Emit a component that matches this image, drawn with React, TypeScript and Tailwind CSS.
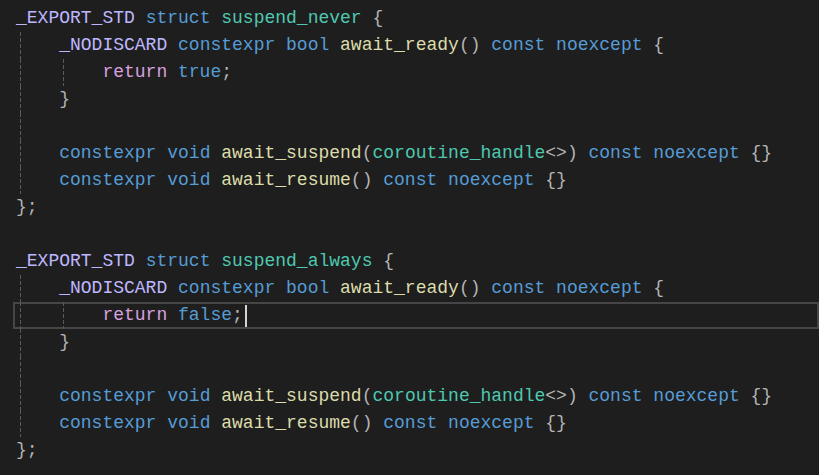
type Tok = [string, string];

const M = "text-[#beb7ff]";
const K = "text-[#569cd6]";
const T = "text-[#4ec9b0]";
const F = "text-[#dcdcaa]";
const R = "text-[#d8a0df]";
const P = "text-[#b4b4b4]";

type Line = { guides?: number; toks: Tok[]; current?: boolean };

const structLines = (name: string, value: string, current: boolean): Line[] => [
  { toks: [["_EXPORT_STD", M], [" struct ", K], [name, T], [" {", P]] },
  {
    guides: 1,
    toks: [["_NODISCARD", M], [" constexpr bool ", K], ["await_ready", F], ["()", P], [" const noexcept ", K], ["{", P]],
  },
  { guides: 2, toks: [["return", R], [" " + value, K], [";", P]], current },
  { guides: 1, toks: [["}", P]] },
  { guides: 1, toks: [] },
  {
    guides: 1,
    toks: [
      ["constexpr void ", K],
      ["await_suspend", F],
      ["(", P],
      ["coroutine_handle", T],
      ["<>)", P],
      [" const noexcept ", K],
      ["{}", P],
    ],
  },
  {
    guides: 1,
    toks: [["constexpr void ", K], ["await_resume", F], ["()", P], [" const noexcept ", K], ["{}", P]],
  },
  { toks: [["};", P]] },
];

const lines: Line[] = [
  ...structLines("suspend_never", "true", false),
  { toks: [] },
  ...structLines("suspend_always", "false", true),
];

// one indent level, 4 columns wide, with the dashed guide near its left edge
function IndentCell() {
  return (
    <span className="flex w-[4ch] shrink-0">
      <span className="ml-[4px] w-px bg-[repeating-linear-gradient(to_bottom,#5a5a5a_0_4px,transparent_4px_6px)]" />
    </span>
  );
}

function CodeLine({ line }: { line: Line }) {
  const guides = Array.from({ length: line.guides ?? 0 });
  return (
    <div
      className={
        "flex h-[27px] items-stretch pl-[3px] " +
        (line.current ? "shadow-[inset_0_0_0_2px_#464646]" : "")
      }
    >
      {guides.map((_, i) => (
        <IndentCell key={i} />
      ))}
      <span className="flex items-center whitespace-pre leading-[27px]">
        {line.toks.map(([t, c], i) => (
          <span key={i} className={c}>
            {t}
          </span>
        ))}
        {line.current && <span className="ml-[2px] inline-block h-[22px] w-[2px] bg-[#d4d4d4]" />}
      </span>
    </div>
  );
}

export default function App() {
  return (
    <div className="h-[475px] w-[819px] overflow-hidden bg-[#1e1e1e] pt-[5px] pl-[13px] font-['Liberation_Mono',monospace] text-[18px]">
      {lines.map((l, i) => (
        <CodeLine key={i} line={l} />
      ))}
    </div>
  );
}
